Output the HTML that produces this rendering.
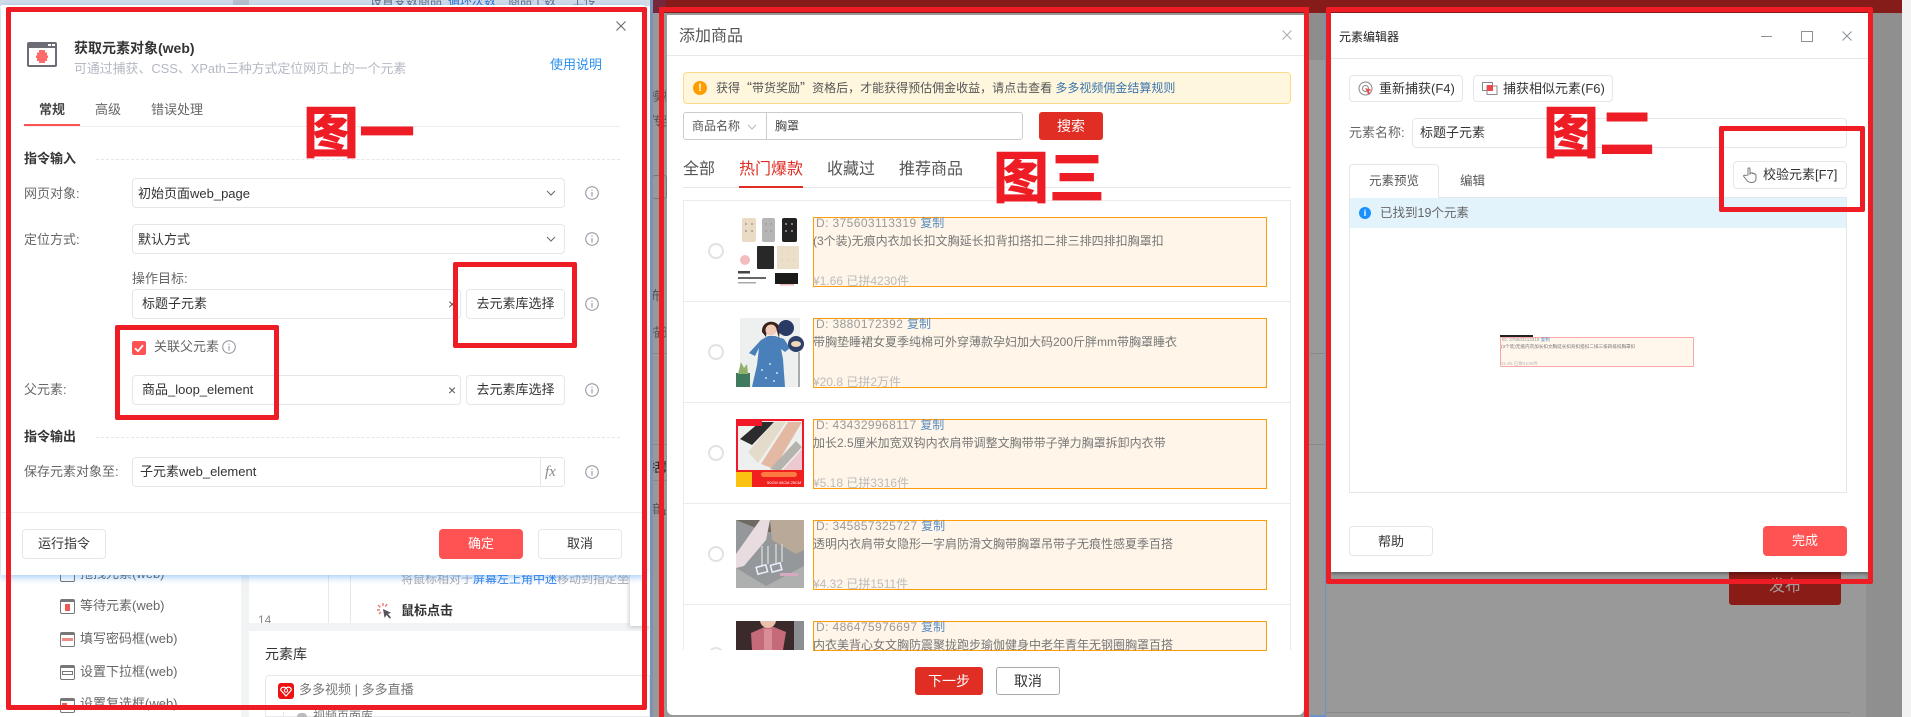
<!DOCTYPE html>
<html lang="zh"><head><meta charset="utf-8"><title>图</title>
<style>
html,body{margin:0;padding:0;width:1911px;height:717px;overflow:hidden;background:#999}
body{position:relative;font-family:"Liberation Sans","Noto Sans CJK SC",sans-serif;font-size:13px;color:#333;filter:blur(.3px)}
div,span,svg{position:absolute;box-sizing:border-box}
.t{white-space:nowrap;line-height:20px;height:20px}
.box{background:#fff;border:1px solid #e4e6ec;border-radius:4px}
.lab{color:#666;font-size:13px}
.btn{background:#fff;border:1px solid #e4e6ec;border-radius:4px;text-align:center;color:#333;white-space:nowrap}
.rr{border:5px solid #ee1c25;border-radius:2px;z-index:20;background:transparent}
.big{font-family:"Noto Sans CJK SC",sans-serif;font-weight:900;font-size:56px;line-height:56px;height:56px;color:#ee1c25;white-space:nowrap;z-index:21}
.y{left:813px;width:454px;height:70px;background:#fff6e9;border:1px solid #ff9c0a}
.id{left:816px;color:#999;font-size:12px;letter-spacing:.4px}
.id b{font-weight:normal;color:#5c8dc0;letter-spacing:0}
.ti{left:813px;color:#777;font-size:12px}
.pr{left:813px;color:#bbb;font-size:12px}
.rowl{left:683px;width:607px;height:1px;background:#ebebeb}
.rad{left:708px;width:16px;height:16px;border:2px solid #e2e2e2;border-radius:50%;background:#fff}
.side{left:80px;color:#666;font-size:13px}
.sic{left:60px;width:15px;height:15px;border:1px solid #777;border-top:3px solid #777;border-radius:2px;background:#fff}
.cq{position:static;font-family:"Noto Sans CJK SC",sans-serif}
</style></head><body>
<svg width="0" height="0" style="left:0;top:0"><defs>
<symbol id="inf" viewBox="0 0 14 14"><circle cx="7" cy="7" r="6.3" fill="none" stroke="#8a8f99" stroke-width="1"/><rect x="6.5" y="6" width="1" height="4.6" fill="#8a8f99"/><rect x="6.5" y="3.6" width="1" height="1.2" fill="#8a8f99"/></symbol>
<symbol id="chv" viewBox="0 0 10 6"><path d="M1 1l4 4 4-4" fill="none" stroke="#666" stroke-width="1"/></symbol>
</defs></svg>

<!-- panel 1 backdrop -->
<div style="left:0;top:0;width:650px;height:717px;background:#fff"></div>
<div style="left:0;top:0;width:650px;height:6px;background:#d4dde9"></div>
<div style="left:233px;top:0;width:16px;height:6px;background:#b9c0cb"></div>
<div class="t" style="left:370px;top:-9px;font-size:12px;color:#5a6a85">设置变数商品</div>
<div class="t" style="left:448px;top:-9px;font-size:12px;color:#2a6fd0">循环次数</div>
<div class="t" style="left:508px;top:-9px;font-size:12px;color:#5a6a85">商品个数</div>
<div class="t" style="left:572px;top:-9px;font-size:12px;color:#5a6a85">上传</div>
<div style="left:241px;top:575px;width:8px;height:142px;background:#f2f3f5"></div>
<div style="left:249px;top:623px;width:400px;height:8px;background:#f2f3f5"></div>
<div style="left:328px;top:575px;width:1px;height:48px;background:#e8e8e8"></div>
<div style="left:350px;top:575px;width:1px;height:48px;background:#e8e8e8"></div>
<div class="t" style="left:258px;top:612px;color:#888;font-size:12px;height:11px;line-height:17px;overflow:hidden">14</div>
<div class="t" style="left:401px;top:569px;color:#aaa;font-size:12px">将鼠标相对于<span style="position:static;color:#2f80e8">屏幕左上角中迷</span>移动到指定坐</div>
<svg style="left:377px;top:603px" width="15" height="17" viewBox="0 0 15 17"><path d="M6 6l1.6 9 2-3 3 3.6 1.4-1.2-3-3.4 3-1.2z" fill="#55565e"/><path d="M6 0v3M1 2l2.4 2.4M0 7h3M2 11l2-2M10 1L8.4 3.6" stroke="#f0605a" stroke-width="1.2" fill="none"/></svg>
<div class="t" style="left:401px;top:601px;font-weight:bold;color:#333;font-size:13px">鼠标点击</div>
<div style="left:630px;top:570px;width:20px;height:56px;background:#fff;box-shadow:-1px 1px 4px rgba(0,0,0,.2)"></div>
<div style="left:249px;top:631px;width:400px;height:86px;background:#fff;border-radius:6px 0 0 0"></div>
<div class="t" style="left:265px;top:644px;font-size:14px;color:#333">元素库</div>
<div style="left:265px;top:675px;width:385px;height:42px;border:1px solid #e8e8ec;border-radius:4px 0 0 0;background:#fff"></div>
<div style="left:278px;top:683px;width:16px;height:16px;background:#ee1111;border-radius:3px"></div>
<svg style="left:280px;top:685px" width="12" height="12" viewBox="0 0 12 12"><path d="M6 11L1 5.5C0 3 3 1 6 3c3-2 6 0 5 2.500z" fill="none" stroke="#fff" stroke-width="1.2"/><circle cx="6" cy="5.500" r="1.700" fill="none" stroke="#fff"/></svg>
<div class="t" style="left:299px;top:680px;color:#777;font-size:13px">多多视频 | 多多直播</div>
<div style="left:283px;top:712px;width:1px;height:5px;background:#e8e8ec"></div>
<div style="left:297px;top:713px;width:10px;height:4px;background:#bbb;border-radius:5px 5px 0 0"></div>
<div class="t" style="left:313px;top:706px;color:#777;font-size:12px">视频页面库</div>

<div class="t side" style="top:564px">拖拽元素(web)</div>
<div class="sic" style="top:567px"></div>
<div class="sic" style="top:599px"></div><div class="t side" style="top:596px">等待元素(web)</div>
<div class="sic" style="top:632px"></div><div class="t side" style="top:629px">填写密码框(web)</div>
<div class="sic" style="top:665px"></div><div class="t side" style="top:662px">设置下拉框(web)</div>
<div class="sic" style="top:698px"></div><div class="t side" style="top:694px">设置复选框(web)</div>
<div style="left:65px;top:604px;width:5px;height:7px;background:#ef5a55"></div>
<div style="left:62px;top:638px;width:11px;height:3px;background:#ef8a85"></div>
<div style="left:62px;top:671px;width:11px;height:4px;border:1px solid #777"></div>
<div style="left:62px;top:703px;width:5px;height:5px;background:#ef5a55"></div>

<!-- panel 1 modal -->
<div style="left:1px;top:5px;width:643px;height:570px;background:#fff;box-shadow:0 2px 7px rgba(40,130,240,.45);z-index:2"></div>
<div id="m1" style="left:0;top:0;width:650px;height:717px;z-index:3">
<svg style="left:616px;top:21px" width="10" height="10" viewBox="0 0 10 10"><path d="M.5.500l9 9M9.500.500l-9 9" stroke="#666" fill="none"/></svg>
<div style="left:27px;top:42px;width:30px;height:25px;background:#fff;border:2px solid #6c6c76;border-top:6px solid #6c6c76;border-radius:2px"></div>
<div style="left:48px;top:44px;width:3px;height:2px;background:#fff"></div><div style="left:52px;top:44px;width:3px;height:2px;background:#fff"></div>
<svg style="left:36px;top:50px" width="12" height="13" viewBox="0 0 12 13"><path d="M3 0h6v2.500H3zM1 2.500h10v3H1zM0 5.500h12v2.500H0zM1 8h10v3H1zM3 11h6v2H3z" fill="#ff6b6b"/></svg>
<div class="t" style="left:74px;top:38px;font-size:14px;font-weight:bold;color:#333">获取元素对象(web)</div>
<div class="t" style="left:74px;top:59px;font-size:12.900px;color:#b4b8c2">可通过捕获、CSS、XPath三种方式定位网页上的一个元素</div>
<div class="t" style="left:550px;top:55px;font-size:13px;color:#2a90f0">使用说明</div>
<div class="t" style="left:39px;top:100px;font-weight:bold;color:#444">常规</div>
<div class="t" style="left:95px;top:100px;color:#666">高级</div>
<div class="t" style="left:151px;top:100px;color:#666">错误处理</div>
<div style="left:24px;top:126px;width:596px;height:1px;background:#eceef2"></div>
<div style="left:24px;top:124px;width:56px;height:2px;background:#ff5252"></div>

<div class="t" style="left:24px;top:149px;font-weight:bold;color:#333">指令输入</div>
<div style="left:96px;top:159px;width:524px;height:0;border-top:1px dashed #e4e6ea"></div>

<div class="t lab" style="left:24px;top:184px">网页对象:</div>
<div class="box" style="left:132px;top:178px;width:433px;height:30px"></div>
<div class="t" style="left:138px;top:184px">初始页面web_page</div>
<svg style="left:546px;top:190px" width="10" height="6"><use href="#chv"/></svg>
<svg style="left:585px;top:186px" width="14" height="14"><use href="#inf"/></svg>

<div class="t lab" style="left:24px;top:230px">定位方式:</div>
<div class="box" style="left:132px;top:224px;width:433px;height:30px"></div>
<div class="t" style="left:138px;top:230px">默认方式</div>
<svg style="left:546px;top:236px" width="10" height="6"><use href="#chv"/></svg>
<svg style="left:585px;top:232px" width="14" height="14"><use href="#inf"/></svg>

<div class="t lab" style="left:132px;top:269px">操作目标:</div>
<div class="box" style="left:132px;top:289px;width:329px;height:30px"></div>
<div class="t" style="left:142px;top:294px">标题子元素</div>
<div class="t" style="left:448px;top:294px;color:#555;font-size:14px">×</div>
<div class="btn" style="left:466px;top:289px;width:99px;height:30px;line-height:28px">去元素库选择</div>
<svg style="left:585px;top:297px" width="14" height="14"><use href="#inf"/></svg>

<div style="left:132px;top:341px;width:14px;height:14px;background:#ff5252;border-radius:2px"></div>
<svg style="left:132px;top:341px" width="14" height="14" viewBox="0 0 14 14"><path d="M3 7.200l3 3 5-6" fill="none" stroke="#fff" stroke-width="1.800"/></svg>
<div class="t lab" style="left:154px;top:337px">关联父元素</div>
<svg style="left:222px;top:340px" width="14" height="14"><use href="#inf"/></svg>

<div class="t lab" style="left:24px;top:380px">父元素:</div>
<div class="box" style="left:132px;top:375px;width:329px;height:30px"></div>
<div class="t" style="left:142px;top:380px">商品_loop_element</div>
<div class="t" style="left:448px;top:380px;color:#555;font-size:14px">×</div>
<div class="btn" style="left:466px;top:375px;width:99px;height:30px;line-height:28px">去元素库选择</div>
<svg style="left:585px;top:383px" width="14" height="14"><use href="#inf"/></svg>

<div class="t" style="left:24px;top:427px;font-weight:bold;color:#333">指令输出</div>
<div style="left:96px;top:437px;width:524px;height:0;border-top:1px dashed #e4e6ea"></div>

<div class="t lab" style="left:24px;top:462px">保存元素对象至:</div>
<div class="box" style="left:132px;top:457px;width:433px;height:30px"></div>
<div style="left:540px;top:457px;width:1px;height:30px;background:#e4e6ec"></div>
<div class="t" style="left:140px;top:462px">子元素web_element</div>
<div class="t" style="left:545px;top:462px;font-family:'Liberation Serif',serif;font-style:italic;font-size:15px;color:#888">fx</div>
<svg style="left:585px;top:465px" width="14" height="14"><use href="#inf"/></svg>

<div style="left:1px;top:512px;width:643px;height:1px;background:#eceef2"></div>
<div class="btn" style="left:22px;top:529px;width:84px;height:30px;line-height:28px">运行指令</div>
<div class="btn" style="left:439px;top:529px;width:84px;height:30px;line-height:30px;background:#ff5252;border:0;color:#fff">确定</div>
<div class="btn" style="left:538px;top:529px;width:84px;height:30px;line-height:28px">取消</div>
</div>
<div class="rr" style="left:6px;top:7px;width:641px;height:703px"></div>
<div class="rr" style="left:453px;top:262px;width:124px;height:86px"></div>
<div class="rr" style="left:115px;top:325px;width:164px;height:95px"></div>
<div class="big" style="left:303px;top:102px">图一</div>

<!-- backdrop stripes -->
<div style="left:650px;top:0;width:1252px;height:13px;background:#861c1a;z-index:1"></div>
<div style="left:650px;top:0;width:16px;height:13px;background:#74283a;z-index:1"></div>
<div style="left:650px;top:0;width:3px;height:717px;background:#7a93b8;z-index:1"></div>
<div style="left:1304px;top:13px;width:27px;height:47px;background:#8d8d8d"></div>
<div class="t" style="left:650px;top:87px;color:#555;font-size:13px;width:16px;overflow:hidden">模板</div>
<div class="t" style="left:650px;top:112px;color:#555;font-size:13px;width:16px;overflow:hidden">传到</div>
<div style="left:652px;top:175px;width:15px;height:24px;border:1px solid #777;border-radius:3px"></div>
<div class="t" style="left:650px;top:286px;color:#555;font-size:13px;width:9px;overflow:hidden">布</div>
<div class="t" style="left:650px;top:323px;color:#555;font-size:13px;width:16px;overflow:hidden">描述</div>
<div style="left:650px;top:353px;width:17px;height:1px;background:#888"></div>
<div style="left:650px;top:444px;width:17px;height:1px;background:#888"></div>
<div style="left:1304px;top:444px;width:27px;height:1px;background:#888"></div>
<div style="left:1310px;top:353px;width:20px;height:1px;background:#888"></div>
<div style="left:650px;top:480px;width:17px;height:1px;background:#888"></div>
<div class="t" style="left:650px;top:458px;color:#222;font-size:13px;width:16px;overflow:hidden">括题</div>
<div class="t" style="left:650px;top:500px;color:#555;font-size:13px;width:16px;overflow:hidden">商品</div>

<!-- panel 2 modal -->
<div style="left:667px;top:15px;width:637px;height:700px;background:#fff;border-radius:0 0 6px 6px;z-index:2"></div>
<div style="left:0;top:0;width:1304px;height:717px;z-index:3">
<div class="t" style="left:679px;top:27px;font-size:16px;color:#555">添加商品</div>
<svg style="left:1282px;top:30px" width="10" height="10" viewBox="0 0 10 10"><path d="M.5.500l9 9M9.500.500l-9 9" stroke="#aaa" fill="none"/></svg>
<div style="left:667px;top:55px;width:637px;height:1px;background:#e8e8e8"></div>
<div style="left:683px;top:72px;width:608px;height:32px;background:#fff6de;border:1px solid #ffd98a;border-radius:4px"></div>
<div style="left:693px;top:81px;width:14px;height:14px;background:#ff9d00;border-radius:50%;color:#fff;font-size:11px;font-weight:bold;line-height:14px;text-align:center">!</div>
<div class="t" style="left:716px;top:78px;font-size:12px;color:#555">获得<span class="cq">“</span>带货奖励<span class="cq">”</span>资格后，才能获得预估佣金收益，请点击查看 <span style="position:static;color:#3b76ad">多多视频佣金结算规则</span></div>
<div style="left:683px;top:112px;width:340px;height:28px;background:#fff;border:1px solid #ccc;border-radius:3px"></div>
<div style="left:766px;top:112px;width:1px;height:28px;background:#ccc"></div>
<div class="t" style="left:692px;top:116px;font-size:12px;color:#555">商品名称</div>
<svg style="left:747px;top:124px" width="10" height="6"><path d="M1 1l4 4 4-4" fill="none" stroke="#bbb"/></svg>
<div class="t" style="left:775px;top:116px;font-size:12px;color:#444">胸罩</div>
<div class="btn" style="left:1039px;top:112px;width:64px;height:28px;line-height:28px;background:#e02e24;border:0;color:#fff;font-size:14px;border-radius:3px">搜索</div>
<div class="t" style="left:683px;top:160px;font-size:16px;color:#555">全部</div>
<div class="t" style="left:739px;top:160px;font-size:16px;color:#e02e24">热门爆款</div>
<div class="t" style="left:827px;top:160px;font-size:16px;color:#555">收藏过</div>
<div class="t" style="left:899px;top:160px;font-size:16px;color:#555">推荐商品</div>
<div style="left:683px;top:187px;width:608px;height:1px;background:#e8e8e8"></div>
<div style="left:739px;top:186px;width:64px;height:2px;background:#e02e24"></div>

<div style="left:666px;top:0;width:638px;height:650px;overflow:hidden">
<div style="left:17px;top:200px;width:608px;height:460px;border:1px solid #ebebeb;border-bottom:0"></div>
<div class="rowl" style="left:17px;top:301px"></div>
<div class="rowl" style="left:17px;top:402px"></div>
<div class="rowl" style="left:17px;top:503px"></div>
<div class="rowl" style="left:17px;top:604px"></div>
</div>

<div class="rad" style="top:243px"></div>
<div class="rad" style="top:344px"></div>
<div class="rad" style="top:445px"></div>
<div class="rad" style="top:546px"></div>

<!-- thumbs -->
<svg style="left:736px;top:218px" width="68" height="68" viewBox="0 0 68 68"><rect width="68" height="68" fill="#fff"/><rect x="6" y="0" width="14" height="24" rx="2" fill="#eadcc4"/><rect x="26" y="0" width="13" height="24" rx="2" fill="#b5b5b5"/><rect x="46" y="0" width="15" height="24" rx="2" fill="#222"/><g fill="#a99"><circle cx="10" cy="6" r="1"/><circle cx="16" cy="6" r="1"/><circle cx="10" cy="13" r="1"/><circle cx="16" cy="13" r="1"/><circle cx="30" cy="6" r="1"/><circle cx="35" cy="6" r="1"/><circle cx="30" cy="13" r="1"/><circle cx="35" cy="13" r="1"/><circle cx="50" cy="6" r="1"/><circle cx="56" cy="6" r="1"/><circle cx="50" cy="13" r="1"/><circle cx="56" cy="13" r="1"/><circle cx="25" cy="35" r="1"/><circle cx="32" cy="35" r="1"/><circle cx="25" cy="42" r="1"/><circle cx="32" cy="42" r="1"/><circle cx="46" cy="35" r="1"/><circle cx="52" cy="35" r="1"/><circle cx="58" cy="35" r="1"/><circle cx="46" cy="42" r="1"/><circle cx="52" cy="42" r="1"/><circle cx="58" cy="42" r="1"/></g><rect x="21" y="28" width="17" height="23" rx="1" fill="#1c1c1e" opacity=".95"/><rect x="41" y="28" width="22" height="23" rx="1" fill="#eadcc4" opacity=".9"/><circle cx="9" cy="42" r="5" fill="#f4bcbc"/><rect x="2" y="53" width="12" height="2.500" fill="#444"/><rect x="2" y="59" width="28" height="2" fill="#666"/><rect x="2" y="64" width="18" height="1.500" fill="#aaa"/><rect x="39" y="55" width="23" height="11" fill="#1a1a1a"/><rect x="44" y="66" width="14" height="1.500" fill="#f3b6b6"/></svg>
<svg style="left:736px;top:318px" width="68" height="69" viewBox="0 0 68 69"><rect width="68" height="69" fill="#fff"/><rect x="4" width="60" height="69" fill="#eef0ef" rx="2"/><rect x="0" y="55" width="14" height="14" fill="#3f7a5f"/><path d="M2 56l3-12 3 6 3-4 1 10z" fill="#8fb06a"/><path d="M25 22l7-4 7 0 9 3 6 9-5 4-4-3 2 10 2 28H16l5-22 2-17-4 8-6-3z" fill="#4a80ba"/><g fill="#cfe0ee"><circle cx="26" cy="52" r="1"/><circle cx="34" cy="46" r="1"/><circle cx="41" cy="55" r="1"/><circle cx="30" cy="60" r="1"/><circle cx="38" cy="63" r="1"/></g><path d="M26 14c-1-12 16-14 18-3l-1 9-3-10-9 0-1 9z" fill="#3a221a"/><circle cx="35" cy="12" r="5.500" fill="#f0cbb8"/><circle cx="50" cy="10" r="8" fill="#283a66"/><circle cx="60" cy="26" r="8" fill="#2e3f6c"/><ellipse cx="60" cy="26" rx="5" ry="3" fill="#f0d8b8"/><rect x="62" y="34" width="2" height="35" fill="#aaa"/></svg>
<svg style="left:736px;top:419px" width="68" height="68" viewBox="0 0 68 68"><rect width="68" height="68" fill="#eef0ef"/><path d="M4 20L24 3h14L16 26z" fill="#2c2c2e"/><path d="M12 33L38 3h12L22 44z" fill="#e3dccb"/><path d="M25 45L52 3h14L38 50z" fill="#e4b9a3"/><path d="M34 50L60 22l6 6-22 24z" fill="#b5b3ad"/><path d="M46 52l20-22v22z" fill="#ecc9cf"/><rect width="68" height="2" fill="#f2182a"/><rect width="2" height="68" fill="#f2182a"/><rect x="66" width="2" height="68" fill="#f2182a"/><rect width="26" height="7" fill="#f2182a"/><path d="M0 51h68v17H0z" fill="#f0201f"/><path d="M0 53h16v15H0z" fill="#fbc211"/><rect x="25" y="53" width="36" height="5" rx="2.500" fill="#ff7a40"/><text x="31" y="65" font-size="4" fill="#fff">50CM 40CM 25CM</text></svg>
<svg style="left:736px;top:520px" width="68" height="68" viewBox="0 0 68 68"><rect width="68" height="68" fill="#95989a"/><path d="M0 0h68v12L30 12z" fill="#6e6a62"/><path d="M34 0h34v30l-8 4L36 20z" fill="#b9a999"/><path d="M0 34L24 0h10l-4 20L8 46 0 48z" fill="#e8dce0"/><path d="M0 68V48l30 18 38-20v22z" fill="#aeb0b0"/><path d="M26 26v20M32 26v18M40 24v20M46 24v18" stroke="#cfd2d0" stroke-width="1.500"/><rect x="21" y="46" width="10" height="7" fill="none" stroke="#eef" stroke-width="1.500" transform="rotate(-15 26 50)"/><rect x="35" y="44" width="10" height="7" fill="none" stroke="#eef" stroke-width="1.500" transform="rotate(-15 40 47)"/><rect x="44" y="53" width="18" height="3" fill="#d8a8c0"/></svg>
<div style="left:736px;top:621px;width:68px;height:29px;overflow:hidden"><svg style="left:0;top:0" width="68" height="29" viewBox="0 0 68 29"><rect width="68" height="29" fill="#3a2a2c"/><rect x="58" width="10" height="29" fill="#8c8f92"/><path d="M16 29L15 12 33 4l17 7-3 18z" fill="#c46a78"/><circle cx="32" cy="-1" r="8" fill="#e8c0ac"/><rect x="28" y="8" width="8" height="21" fill="#d88c98"/></svg></div>

<!-- rows -->
<div class="y" style="top:217px"></div>
<div class="t id" style="top:213px">D: 375603113319 <b style="position:static">复制</b></div>
<div class="t ti" style="top:231px">(3个装)无痕内衣加长扣文胸延长扣背扣搭扣二排三排四排扣胸罩扣</div>
<div class="t pr" style="top:271px">¥1.66 已拼4230件</div>
<div class="y" style="top:318px"></div>
<div class="t id" style="top:314px">D: 3880172392 <b style="position:static">复制</b></div>
<div class="t ti" style="top:332px">带胸垫睡裙女夏季纯棉可外穿薄款孕妇加大码200斤胖mm带胸罩睡衣</div>
<div class="t pr" style="top:372px">¥20.8 已拼2万件</div>
<div class="y" style="top:419px"></div>
<div class="t id" style="top:415px">D: 434329968117 <b style="position:static">复制</b></div>
<div class="t ti" style="top:433px">加长2.5厘米加宽双钩内衣肩带调整文胸带带子弹力胸罩拆卸内衣带</div>
<div class="t pr" style="top:473px">¥5.18 已拼3316件</div>
<div class="y" style="top:520px"></div>
<div class="t id" style="top:516px">D: 345857325727 <b style="position:static">复制</b></div>
<div class="t ti" style="top:534px">透明内衣肩带女隐形一字肩防滑文胸带胸罩吊带子无痕性感夏季百搭</div>
<div class="t pr" style="top:574px">¥4.32 已拼1511件</div>
<div class="y" style="top:621px;height:30px"></div>
<div class="t id" style="top:617px">D: 486475976697 <b style="position:static">复制</b></div>
<div class="t ti" style="top:635px;height:16px;overflow:hidden">内衣美背心女文胸防震聚拢跑步瑜伽健身中老年青年无钢圈胸罩百搭</div>
<div class="rad" style="top:647px;clip-path:inset(0 0 13px 0)"></div>

<div class="btn" style="left:915px;top:667px;width:68px;height:28px;line-height:28px;background:#e02e24;border:0;color:#fff;font-size:14px;border-radius:3px">下一步</div>
<div class="btn" style="left:996px;top:667px;width:64px;height:28px;line-height:26px;border:1px solid #aaa;font-size:14px;border-radius:3px">取消</div>
</div>
<div style="left:659px;top:7px;width:5px;height:710px;background:#ee1c25;z-index:20"></div>
<div style="left:1304px;top:7px;width:5px;height:710px;background:#ee1c25;z-index:20"></div>
<div style="left:659px;top:7px;width:650px;height:5px;background:#ee1c25;z-index:20"></div>
<div class="big" style="left:993px;top:147px">图三</div>

<!-- panel 3 -->
<div style="left:1866px;top:13px;width:36px;height:704px;background:#8f8f8f"></div>
<div style="left:1902px;top:0;width:9px;height:717px;background:#f2f2f2"></div>
<div style="left:1325px;top:13px;width:1px;height:704px;background:#6c90c8"></div>
<div style="left:1310px;top:715px;width:16px;height:2px;background:#6c90c8"></div>
<div style="left:1326px;top:712px;width:524px;height:1px;background:#8a8a8a"></div>
<div style="left:1729px;top:570px;width:112px;height:35px;background:#8a1c18;border-radius:3px"></div>
<div class="t" style="left:1769px;top:577px;font-size:16px;color:#a89a98">发布</div>
<div style="left:1331px;top:13px;width:537px;height:559px;background:#fff;box-shadow:0 2px 3px rgba(0,0,0,.35);z-index:2"></div>
<div style="left:0;top:0;width:1911px;height:717px;z-index:3;pointer-events:none">
<div class="t" style="left:1339px;top:27px;font-size:12px;color:#222">元素编辑器</div>
<div style="left:1761px;top:36px;width:11px;height:1px;background:#8c9199"></div>
<div style="left:1801px;top:31px;width:12px;height:11px;border:1px solid #8c9199"></div>
<svg style="left:1842px;top:31px" width="10" height="10" viewBox="0 0 10 10"><path d="M.5.500l9 9M9.500.500l-9 9" stroke="#8c9199" fill="none"/></svg>
<div style="left:1331px;top:58px;width:537px;height:1px;background:#e6e7ea"></div>

<div class="btn" style="left:1349px;top:75px;width:114px;height:27px"></div>
<svg style="left:1358px;top:81px" width="16" height="15" viewBox="0 0 16 15"><circle cx="7.500" cy="7.500" r="6.500" fill="none" stroke="#888"/><circle cx="7.500" cy="7.500" r="3" fill="none" stroke="#888"/><path d="M7 7l7 2-3 1 1 3-2 .5-1-3z" fill="#f0474a"/></svg>
<div class="t" style="left:1379px;top:79px;font-size:13px;color:#333">重新捕获(F4)</div>
<div class="btn" style="left:1473px;top:75px;width:140px;height:27px"></div>
<svg style="left:1482px;top:82px" width="16" height="13" viewBox="0 0 16 13"><rect x=".5" y=".5" width="10" height="8" fill="none" stroke="#888"/><rect x="5" y="4" width="10" height="8.500" fill="#fff" stroke="#888"/><rect x="5" y="3" width="6" height="6" fill="#f0474a"/></svg>
<div class="t" style="left:1503px;top:79px;font-size:13px;color:#333">捕获相似元素(F6)</div>

<div class="t lab" style="left:1349px;top:123px">元素名称:</div>
<div class="box" style="left:1412px;top:118px;width:435px;height:30px"></div>
<div class="t" style="left:1420px;top:123px">标题子元素</div>

<div style="left:1349px;top:197px;width:498px;height:296px;border:1px solid #e4e6ea;background:#fff"></div>
<div style="left:1349px;top:164px;width:90px;height:34px;background:#fff;border:1px solid #e4e6ea;border-bottom:0;border-radius:4px 4px 0 0"></div>
<div class="t" style="left:1369px;top:171px;font-size:12.500px;color:#555">元素预览</div>
<div class="t" style="left:1460px;top:171px;font-size:12.500px;color:#555">编辑</div>
<div class="btn" style="left:1733px;top:161px;width:114px;height:28px"></div>
<svg style="left:1743px;top:167px" width="14" height="16" viewBox="0 0 14 16"><path d="M5 8V2c0-1.500 2-1.500 2 0v5l1-1c1-.5 1.500 0 1.500.5l1-.2c.8 0 1 .5 1 .8l.5 0c.8 0 1 .5 1 1V12c0 2-2 3.500-4 3.500S5 15 4 13.500L.8 9.500c-.6-1 .6-1.800 1.400-1z" fill="none" stroke="#777"/></svg>
<div class="t" style="left:1763px;top:165px;font-size:13px;color:#333">校验元素[F7]</div>

<div style="left:1350px;top:198px;width:496px;height:30px;background:#e3f3fc"></div>
<div style="left:1359px;top:207px;width:12px;height:12px;border-radius:50%;background:#1890ff;color:#fff;font-size:9px;font-weight:bold;text-align:center;line-height:12px">i</div>
<div class="t" style="left:1380px;top:203px;font-size:12.500px;color:#666">已找到19个元素</div>

<div style="left:1500px;top:335px;width:33px;height:2px;background:#222"></div>
<div style="left:1500px;top:337px;width:194px;height:30px;background:#fff6ec;border:1px solid #f7a9a9;border-radius:1px"></div>
<div style="left:1502px;top:337px;font-size:4.600px;line-height:6px;white-space:nowrap;color:#999">ID: 375603113319 <span style="position:static;color:#5c8dc0">复制</span></div>
<div style="left:1501px;top:344px;font-size:4.600px;line-height:6px;white-space:nowrap;color:#777">(3个装)无痕内衣加长扣文胸延长扣背扣搭扣二排三排四排扣胸罩扣</div>
<div style="left:1501px;top:361px;font-size:4.600px;line-height:6px;white-space:nowrap;color:#bbb">¥1.66 已拼4230件</div>

<div class="btn" style="left:1349px;top:526px;width:84px;height:30px;line-height:30px">帮助</div>
<div class="btn" style="left:1763px;top:526px;width:84px;height:30px;line-height:30px;background:#ff5252;border:0;color:#fff">完成</div>
</div>
<div class="rr" style="left:1326px;top:7px;width:547px;height:577px"></div>
<div class="rr" style="left:1719px;top:126px;width:146px;height:86px"></div>
<div class="big" style="left:1543px;top:102px">图二</div>
</body></html>
